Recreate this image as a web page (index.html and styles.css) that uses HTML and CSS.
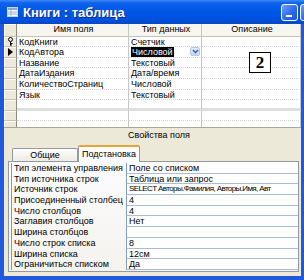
FILE: index.html
```html
<!DOCTYPE html>
<html lang="ru">
<head>
  <meta charset="UTF-8" />
  <title>Книги : таблица</title>
  <link rel="stylesheet" href="styles.css">
</head>
<body>

<div class="window">
  <div class="titlebar">
    <svg class="app-icon" width="11" height="10" viewBox="0 0 11 10">
      <rect x="0.5" y="0.5" width="10" height="9" fill="#fff" stroke="#c9d6ee"/>
      <rect x="1" y="1" width="9" height="2" fill="#8aa6d8"/>
      <path d="M1 5h9M1 7h9M4 3v6" stroke="#9cb0d4" stroke-width="1"/>
    </svg>
    <span class="title">Книги : таблица</span>
    <div class="title-btns">
      <span class="tbtn"><i></i></span>
      <span class="tbtn"></span>
    </div>
  </div>

  <div class="frame">
    <div class="design">
      <div class="row head">
        <div class="sel"></div>
        <div class="cell">Имя поля</div>
        <div class="cell">Тип данных</div>
        <div class="cell">Описание</div>
      </div>
      <div class="row">
        <div class="sel">
          <svg width="7" height="9" viewBox="0 0 7 9"><circle cx="3.5" cy="2.5" r="2" fill="none" stroke="#000"/><path d="M3.5 4.5v4M3.5 6.5h2M3.5 8h1.5" stroke="#000"/></svg>
        </div>
        <div class="cell">КодКниги</div>
        <div class="cell">Счетчик</div>
        <div class="cell"></div>
      </div>
      <div class="row">
        <div class="sel"><span class="pointer"></span></div>
        <div class="cell">КодАвтора</div>
        <div class="cell combo"><span class="picked">Числовой</span><span class="drop"><svg width="7" height="5" viewBox="0 0 7 5"><path d="M1 1l2.5 2.5L6 1" fill="none" stroke="#3b5db5" stroke-width="1.5"/></svg></span></div>
        <div class="cell"></div>
      </div>
      <div class="row">
        <div class="sel"></div>
        <div class="cell">Название</div>
        <div class="cell">Текстовый</div>
        <div class="cell"></div>
      </div>
      <div class="row">
        <div class="sel"></div>
        <div class="cell">ДатаИздания</div>
        <div class="cell">Дата/время</div>
        <div class="cell"></div>
      </div>
      <div class="row">
        <div class="sel"></div>
        <div class="cell">КоличествоСтраниц</div>
        <div class="cell">Числовой</div>
        <div class="cell"></div>
      </div>
      <div class="row">
        <div class="sel"></div>
        <div class="cell">Язык</div>
        <div class="cell">Текстовый</div>
        <div class="cell"></div>
      </div>
      <div class="row split">
        <div class="sel"></div>
        <div class="cell"></div>
        <div class="cell"></div>
        <div class="cell"></div>
      </div>
      <div class="row">
        <div class="sel"></div>
        <div class="cell"></div>
        <div class="cell"></div>
        <div class="cell"></div>
      </div>
      <div class="row">
        <div class="sel"></div>
        <div class="cell"></div>
        <div class="cell"></div>
        <div class="cell"></div>
      </div>

      <div class="mark">2</div>
    </div>

    <div class="props">
      <div class="props-title">Свойства поля</div>
      <div class="tabs">
        <span class="tab">Общие</span>
        <span class="tab active">Подстановка</span>
      </div>
      <div class="page">
        <div class="plist">
          <div class="prow"><span>Тип элемента управления</span><span>Поле со списком</span></div>
          <div class="prow"><span>Тип источника строк</span><span>Таблица или запрос</span></div>
          <div class="prow"><span>Источник строк</span><span class="sql">SELECT Авторы.Фамилия, Авторы.Имя, Авт</span></div>
          <div class="prow"><span>Присоединенный столбец</span><span>4</span></div>
          <div class="prow"><span>Число столбцов</span><span>4</span></div>
          <div class="prow"><span>Заглавия столбцов</span><span>Нет</span></div>
          <div class="prow"><span>Ширина столбцов</span><span></span></div>
          <div class="prow"><span>Число строк списка</span><span>8</span></div>
          <div class="prow"><span>Ширина списка</span><span>12см</span></div>
          <div class="prow"><span>Ограничиться списком</span><span>Да</span></div>
        </div>
      </div>
    </div>
  </div>
</div>

</body>
</html>
```

FILE: styles.css
```css
body {
  margin: 0;
  overflow: hidden;
}
.window {
  width: 304px;
  height: 280px;
  display: flex;
  flex-direction: column;
  background-color: #2058de;
  font-family: 'Liberation Sans', Arial, sans-serif;
  font-size: 9px;
  color: #000;
}
.titlebar {
  height: 24px;
  flex: none;
  display: flex;
  align-items: center;
  padding-left: 7px;
  background: linear-gradient(#3d8af7 0, #0f62ec 3px, #0058e6 45%, #0052de 80%, #0847c4 100%);
  color: #fff;
}
.app-icon {
  margin-right: 5px;
}
.title {
  font-size: 13px;
  font-weight: bold;
  text-shadow: 1px 1px 0 #0a2e9a;
}
.title-btns {
  margin-left: auto;
  display: flex;
  gap: 2px;
  margin-right: -13px;
}
.tbtn {
  width: 15px;
  height: 15px;
  border: 1px solid #fff;
  border-radius: 3px;
  background: linear-gradient(135deg, #6f9ff8, #2a66ea 60%, #1d56d8);
  position: relative;
}
.tbtn i {
  position: absolute;
  left: 4px;
  bottom: 3px;
  width: 6px;
  height: 2px;
  background-color: #fff;
}
.frame {
  flex: 1;
  display: flex;
  flex-direction: column;
  margin: 0 3px 4px 4px;
  background-color: #ece9d8;
}
.design {
  height: 103px;
  flex: none;
  background-color: #fff;
  position: relative;
  overflow: hidden;
}
.row {
  display: grid;
  grid-template-columns: 13px 112px 73px 99px;
  height: 10.6px;
}
.row.head {
  height: 12.6px;
}
.row.split .cell {
  border-bottom: 3px solid #dedede;
}
.sel {
  background-color: #ece9d8;
  border-right: 1px solid #8e8c80;
  border-bottom: 1px solid #c6c2b0;
  box-shadow: inset 1px 1px 0 #fff;
  display: flex;
  align-items: center;
  justify-content: center;
}
.cell {
  border-right: 1px solid #c6c6c6;
  border-bottom: 1px dotted #d4d4d4;
  padding-left: 2px;
  line-height: 10px;
  white-space: nowrap;
  overflow: hidden;
  position: relative;
}
.head .cell {
  background-color: #f6f5ef;
  border-bottom: 1px solid #c6c2b0;
  text-align: center;
  line-height: 11px;
}
.pointer {
  width: 0;
  height: 0;
  border-top: 4px solid transparent;
  border-bottom: 4px solid transparent;
  border-left: 5px solid #000;
}
.picked {
  background-color: #000;
  color: #fff;
  padding: 0 1px;
}
.drop {
  position: absolute;
  right: 1px;
  top: 0;
  width: 10px;
  height: 9px;
  border: 1px solid #b5c7ef;
  border-radius: 2px;
  background: linear-gradient(#e3ecff, #c2d4fb);
  display: flex;
  align-items: center;
  justify-content: center;
  box-sizing: border-box;
}
.mark {
  position: absolute;
  left: 245px;
  top: 28px;
  width: 20px;
  height: 19px;
  border: 1px solid #000;
  background-color: #fff;
  font-family: 'Liberation Serif', 'Times New Roman', serif;
  font-weight: bold;
  font-size: 17px;
  line-height: 20px;
  text-align: center;
}
.props {
  flex: 1;
  display: flex;
  flex-direction: column;
  border-top: 1px solid #aca899;
}
.props-title {
  padding: 2px 0 0 124px;
  height: 14px;
  line-height: 10px;
}
.tabs {
  display: flex;
  align-items: flex-end;
  padding: 0 0 0 8px;
  height: 17px;
}
.tab {
  width: 64px;
  height: 12px;
  text-align: center;
  line-height: 12px;
  border: 1px solid #919b9c;
  border-bottom: none;
  border-radius: 2px 2px 0 0;
  background: linear-gradient(#fefefe, #ecebe5);
}
.tab.active {
  width: 60px;
  height: 15px;
  line-height: 14px;
  background-color: #fcfcfe;
  background-image: none;
  border-top: 2px solid #e8a33a;
  margin-bottom: -1px;
  position: relative;
}
.page {
  flex: 1;
  margin: 0 2px 4px 4px;
  border: 1px solid #919b9c;
  background: linear-gradient(#fcfcfe, #f4f3ee);
  padding: 1px 0 0 2px;
}
.plist {
  border-left: 1px solid #7f9db9;
}
.prow {
  display: grid;
  grid-template-columns: 114px 1fr;
  height: 10.7px;
  line-height: 10px;
}
.prow span {
  padding-left: 2px;
  white-space: nowrap;
  overflow: hidden;
}
.prow span + span {
  background-color: #fff;
  border-left: 1px solid #7f9db9;
  border-bottom: 1px solid #a9bdd9;
}
.prow .sql {
  font-size: 8px;
  letter-spacing: -0.6px;
}
```
